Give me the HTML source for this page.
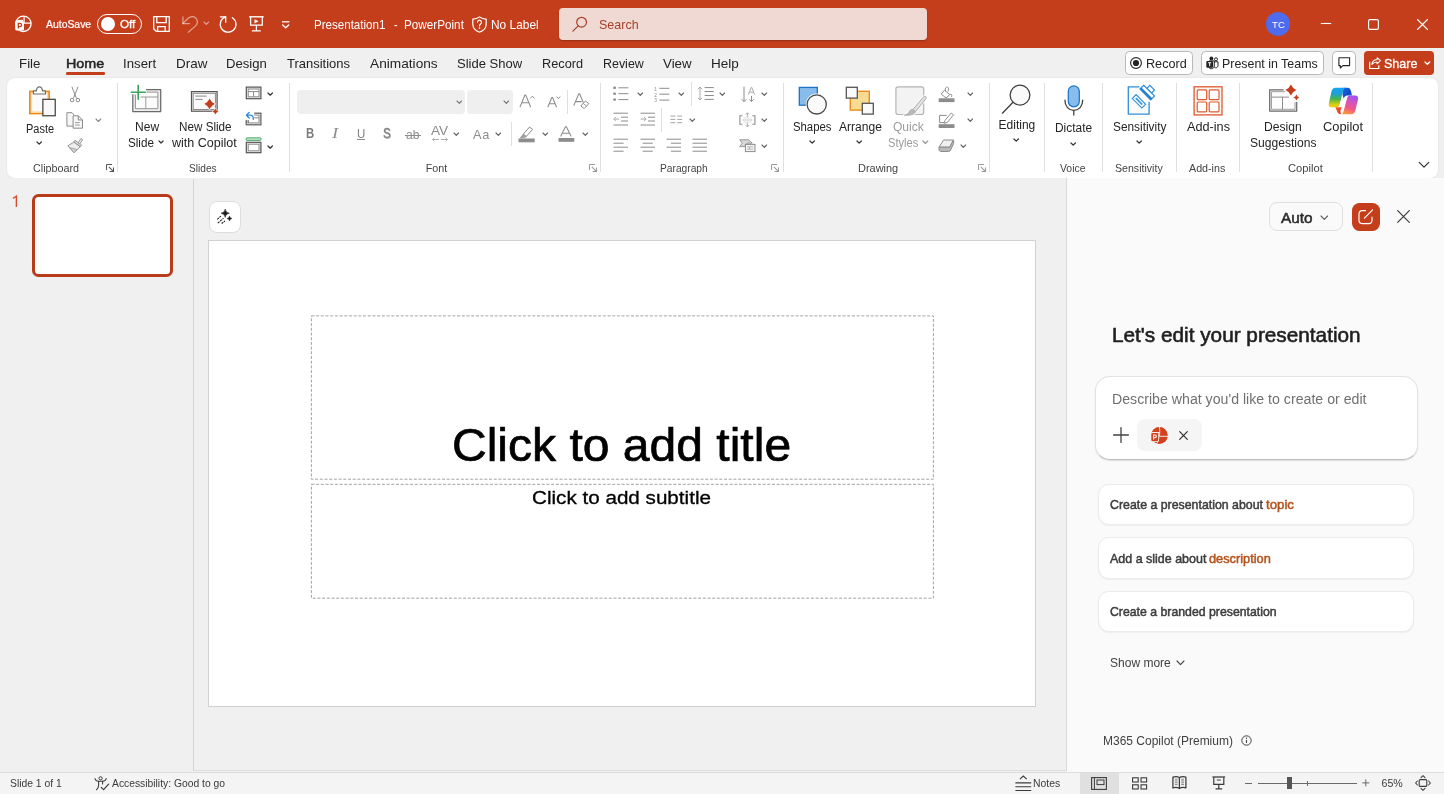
<!DOCTYPE html>
<html lang="en"><head><meta charset="utf-8"><title>Presentation1 - PowerPoint</title>
<style>
*{margin:0;padding:0;box-sizing:border-box}
html,body{width:1444px;height:794px;overflow:hidden;background:#f0f0f0;font-family:"Liberation Sans",sans-serif}
#r{position:relative;width:1444px;height:794px;overflow:hidden;will-change:transform}
.t{position:absolute;white-space:pre;transform-origin:0 0;display:inline-block}
.i{position:absolute;overflow:visible}
.b{position:absolute}
</style></head>
<body><div id="r">
<div class="b" style="left:0.00px;top:0.00px;width:1444.00px;height:48.00px;background:#C43E1C;"></div>
<div class="b" style="left:0.00px;top:48.00px;width:1444.00px;height:130.00px;background:#f0f0f0;"></div>
<div class="b" style="left:7.00px;top:78.00px;width:1431.00px;height:100.00px;background:#fff;border-radius:8px;box-shadow:0 0 2px rgba(0,0,0,.10);"></div>
<svg class="i" style="left:14.00px;top:15.00px;" width="19" height="18" viewBox="0 0 19 18"><circle cx="9.4" cy="8.8" r="7.7" fill="none" stroke="#fff" stroke-width="1.3"/><path d="M10.1 1.2 V8.1 H17" fill="none" stroke="#fff" stroke-width="1.2"/><path d="M3.2 5.4 H9" stroke="#fff" stroke-width="1.1"/><rect x="1.2" y="5.9" width="8.8" height="9.7" rx="1.6" fill="#fff"/><path d="M4.3 13.4 V8.3 H6 A1.6 1.6 0 0 1 6 11.5 H4.3" fill="none" stroke="#C43E1C" stroke-width="1.25"/></svg>
<span class="t" style="transform:scaleX(0.9829);left:46.36px;top:18px;font-size:10.60px;line-height:13px;color:#fff;-webkit-text-stroke:0.2px #fff;">AutoSave</span>
<div class="b" style="left:97.00px;top:14.00px;width:44.50px;height:20.00px;border:1px solid #fff;border-radius:10px;"></div>
<div class="b" style="left:100.70px;top:16.90px;width:14.20px;height:14.20px;background:#fff;border-radius:50%;"></div>
<span class="t" style="transform:scaleX(1.1025);left:119.56px;top:18px;font-size:10.60px;line-height:13px;color:#fff;-webkit-text-stroke:0.3px #fff;">Off</span>
<svg class="i" style="left:153.00px;top:16.00px;" width="17" height="16" viewBox="0 0 17 16"><path d="M0.7 0.7 H16.3 V15.3 H3.2 L0.7 12.8 Z" fill="none" stroke="#fff" stroke-width="1.3" stroke-linejoin="round"/><path d="M3.8 0.7 V6.6 H13.2 V0.7" fill="none" stroke="#fff" stroke-width="1.3"/><path d="M4.6 15.3 V10.6 H12.2 V15.3" fill="none" stroke="#fff" stroke-width="1.3"/></svg>
<svg class="i" style="left:182.00px;top:15.50px;" width="16" height="17" viewBox="0 0 16 17"><path d="M0.9 0.8 V7.5 H7.5" fill="none" stroke="#fff" stroke-width="1.25" stroke-linecap="round" stroke-linejoin="round" opacity=".5"/><path d="M0.9 7.5 L5.6 2.8 C8.4 0 12.4 -0.2 14.4 2.8 C16.2 5.6 15 8.6 13 10.4 L6.3 16.2" fill="none" stroke="#fff" stroke-width="1.25" stroke-linecap="round" opacity=".5"/></svg>
<svg class="i" style="left:202.80px;top:21.40px;" width="6.6" height="4.4" viewBox="0 0 6.6 4.4"><path d="M1 1 L3.3 3.4 L5.6 1" fill="none" stroke="#fff" stroke-width="1.15" stroke-linecap="round" stroke-linejoin="round" opacity="0.5"/></svg>
<svg class="i" style="left:219.00px;top:15.50px;" width="18" height="17" viewBox="0 0 18 17"><path d="M13.4 1.7 A7.9 7.9 0 1 1 6.7 0.8" fill="none" stroke="#fff" stroke-width="1.3" stroke-linecap="round"/><path d="M1.4 0.8 H6.7 V6.2" fill="none" stroke="#fff" stroke-width="1.3" stroke-linecap="round" stroke-linejoin="round"/></svg>
<svg class="i" style="left:248.00px;top:15.50px;" width="17" height="16" viewBox="0 0 17 16"><path d="M1.2 0.8 H15.7" stroke="#fff" stroke-width="1.4" fill="none"/><path d="M2.6 1 V9.1 H14.3 V1" fill="none" stroke="#fff" stroke-width="1.25"/><path d="M8.4 9.1 V14.9 M3.9 14.9 H12.8" stroke="#fff" stroke-width="1.25" fill="none"/><path d="M6.5 3.2 L10.6 5.3 L6.5 7.4 Z" fill="#fff"/></svg>
<svg class="i" style="left:281.00px;top:19.50px;" width="9" height="9" viewBox="0 0 9 9"><path d="M1 1.8 H8.4" stroke="#fff" stroke-width="1.3"/><path d="M1.7 4.9 L4.7 7.7 L7.7 4.9" fill="none" stroke="#fff" stroke-width="1.35" stroke-linecap="round" stroke-linejoin="round"/></svg>
<span class="t" style="transform:scaleX(0.9185);left:314.44px;top:18px;font-size:12.60px;line-height:15px;color:#fff;">Presentation1</span>
<span class="t" style="transform:scaleX(0.8565);left:393.80px;top:18px;font-size:12.60px;line-height:15px;color:#fff;">-</span>
<span class="t" style="transform:scaleX(0.9298);left:404.24px;top:18px;font-size:12.60px;line-height:15px;color:#fff;">PowerPoint</span>
<svg class="i" style="left:472.00px;top:15.50px;" width="15" height="17" viewBox="0 0 15 17"><path d="M7.5 0.9 C9.4 2.4 11.6 3.1 14.2 3.2 V8 C14.2 11.9 11.5 14.8 7.5 16.2 C3.5 14.8 0.8 11.9 0.8 8 V3.2 C3.4 3.1 5.6 2.4 7.5 0.9 Z" fill="none" stroke="#fff" stroke-width="1.2" stroke-linejoin="round"/><path d="M5.5 6.2 A2 2 0 1 1 8.6 7.9 C7.7 8.5 7.5 8.9 7.5 9.9" fill="none" stroke="#fff" stroke-width="1.2" stroke-linecap="round"/><circle cx="7.5" cy="12.1" r=".85" fill="#fff"/></svg>
<span class="t" style="transform:scaleX(0.9477);left:490.84px;top:18px;font-size:12.60px;line-height:15px;color:#fff;">No Label</span>
<div class="b" style="left:559.00px;top:8.00px;width:368.00px;height:31.50px;background:#f0d9d2;border-radius:4px;box-shadow:0 1px 1.5px rgba(0,0,0,.25);"></div>
<svg class="i" style="left:571.50px;top:16.00px;" width="16" height="16" viewBox="0 0 16 16"><circle cx="9.6" cy="6.2" r="4.9" fill="none" stroke="#a4402a" stroke-width="1.2"/><path d="M6.2 9.8 L0.9 15.1" stroke="#a4402a" stroke-width="1.2" stroke-linecap="round"/></svg>
<span class="t" style="transform:scaleX(0.9192);left:599.38px;top:16px;font-size:13.60px;line-height:17px;color:#a4402a;">Search</span>
<div class="b" style="left:1266.00px;top:12.00px;width:24.00px;height:24.00px;background:#4f6bed;border-radius:50%;"></div>
<span class="t" style="transform:scaleX(0.9859);left:1271.81px;top:19px;font-size:9.80px;line-height:12px;color:#fff;">TC</span>
<svg class="i" style="left:1320.00px;top:18.00px;" width="12" height="12" viewBox="0 0 12 12"><path d="M0.8 5.5 H11.2" stroke="#fff" stroke-width="1.1"/></svg>
<svg class="i" style="left:1368.00px;top:18.50px;" width="11" height="11" viewBox="0 0 11 11"><rect x="0.6" y="0.6" width="9.8" height="9.8" rx="1.3" fill="none" stroke="#fff" stroke-width="1.1"/></svg>
<svg class="i" style="left:1416.50px;top:18.50px;" width="11" height="11" viewBox="0 0 11 11"><path d="M0.5 0.5 L10.5 10.5 M10.5 0.5 L0.5 10.5" stroke="#fff" stroke-width="1.1" stroke-linecap="round"/></svg>
<span class="t" style="transform:scaleX(0.9813);left:19.38px;top:55px;font-size:13.60px;line-height:17px;color:#242424;">File</span>
<span class="t" style="transform:scaleX(1.0560);left:65.58px;top:55px;font-size:13.60px;line-height:17px;color:#242424;-webkit-text-stroke:0.5px #242424;">Home</span>
<div class="b" style="left:66.00px;top:72.40px;width:38.50px;height:2.60px;background:#C43E1C;border-radius:1.3px;"></div>
<span class="t" style="transform:scaleX(0.9734);left:123.28px;top:55px;font-size:13.60px;line-height:17px;color:#242424;">Insert</span>
<span class="t" style="transform:scaleX(0.9893);left:176.48px;top:55px;font-size:13.60px;line-height:17px;color:#242424;">Draw</span>
<span class="t" style="transform:scaleX(0.9662);left:226.28px;top:55px;font-size:13.60px;line-height:17px;color:#242424;">Design</span>
<span class="t" style="transform:scaleX(0.9547);left:287.28px;top:55px;font-size:13.60px;line-height:17px;color:#242424;">Transitions</span>
<span class="t" style="transform:scaleX(1.0066);left:369.68px;top:55px;font-size:13.60px;line-height:17px;color:#242424;">Animations</span>
<span class="t" style="transform:scaleX(0.9585);left:457.48px;top:55px;font-size:13.60px;line-height:17px;color:#242424;">Slide Show</span>
<span class="t" style="transform:scaleX(0.9377);left:541.98px;top:55px;font-size:13.60px;line-height:17px;color:#242424;">Record</span>
<span class="t" style="transform:scaleX(0.9152);left:602.98px;top:55px;font-size:13.60px;line-height:17px;color:#242424;">Review</span>
<span class="t" style="transform:scaleX(0.9787);left:663.38px;top:55px;font-size:13.60px;line-height:17px;color:#242424;">View</span>
<span class="t" style="transform:scaleX(0.9938);left:710.98px;top:55px;font-size:13.60px;line-height:17px;color:#242424;">Help</span>
<div class="b" style="left:1125.20px;top:50.60px;width:67.80px;height:24.00px;background:#fff;border:1px solid #b9b9b9;border-radius:4.5px;"></div>
<svg class="i" style="left:1130.00px;top:56.60px;" width="12" height="12" viewBox="0 0 12 12"><circle cx="6" cy="6" r="5.4" fill="none" stroke="#242424" stroke-width="1.1"/><circle cx="6" cy="6" r="3.1" fill="#242424"/></svg>
<span class="t" style="transform:scaleX(0.9285);left:1145.98px;top:55px;font-size:13.60px;line-height:17px;color:#242424;">Record</span>
<div class="b" style="left:1201.00px;top:50.60px;width:123.00px;height:24.00px;background:#fff;border:1px solid #b9b9b9;border-radius:4.5px;"></div>
<svg class="i" style="left:1205.50px;top:56.00px;" width="13" height="13" viewBox="0 0 13 13"><circle cx="5.4" cy="2.4" r="1.9" fill="#242424"/><circle cx="10" cy="3.3" r="1.5" fill="none" stroke="#242424" stroke-width="1"/><path d="M8.3 5.8 H12 V9.6 A2.2 2.2 0 0 1 8.3 11.2" fill="none" stroke="#242424" stroke-width="1"/><path d="M3.2 4.9 H8.3 V10 A3 3 0 0 1 3.4 12.1 Z" fill="none" stroke="#242424" stroke-width="1"/><rect x="0.3" y="4.9" width="6.8" height="6.8" rx="1" fill="#242424"/><path d="M2.2 6.7 H5.2 M3.7 6.7 V10.2" stroke="#fff" stroke-width="1"/></svg>
<span class="t" style="transform:scaleX(0.9133);left:1221.98px;top:55px;font-size:13.60px;line-height:17px;color:#242424;">Present in Teams</span>
<div class="b" style="left:1332.20px;top:50.60px;width:23.50px;height:24.00px;background:#fff;border:1px solid #b9b9b9;border-radius:4.5px;"></div>
<svg class="i" style="left:1338.00px;top:56.50px;" width="13" height="13" viewBox="0 0 13 13"><path d="M0.9 0.8 H11.6 V8.6 H4.9 L2.3 11 V8.6 H0.9 Z" fill="none" stroke="#242424" stroke-width="1.1" stroke-linejoin="round"/></svg>
<div class="b" style="left:1364.20px;top:50.50px;width:70.00px;height:24.40px;background:#C43E1C;border-radius:4px;"></div>
<svg class="i" style="left:1368.50px;top:56.50px;" width="13" height="13" viewBox="0 0 13 13"><path d="M0.7 4.8 V11.5 H9.8 V8.2" fill="none" stroke="#fff" stroke-width="1.2"/><path d="M8.1 0.7 L11.4 3.7 L8.1 6.8 V4.9 C5.6 4.9 4 5.8 2.9 7.4 C3.2 4.6 5.2 2.8 8.1 2.6 Z" fill="none" stroke="#fff" stroke-width="1.05" stroke-linejoin="round"/></svg>
<span class="t" style="transform:scaleX(0.9205);left:1384.38px;top:55px;font-size:13.60px;line-height:17px;color:#fff;-webkit-text-stroke:0.3px #fff;">Share</span>
<svg class="i" style="left:1423.65px;top:60.95px;" width="6.7" height="4.3" viewBox="0 0 6.7 4.3"><path d="M1 1 L3.35 3.3 L5.7 1" fill="none" stroke="#fff" stroke-width="1.3" stroke-linecap="round" stroke-linejoin="round" opacity="1"/></svg>
<svg class="i" style="left:28.00px;top:85.00px;" width="30" height="33" viewBox="0 0 30 33"><rect x="1.9" y="6.5" width="19.2" height="22" fill="#fbfbfb" stroke="#ec8b16" stroke-width="1.8"/><rect x="3.5" y="8" width="16" height="19" fill="none" stroke="#fbdca6" stroke-width="1.3"/><path d="M5.4 9 V5.9 H8.3 C8.6 3.4 9.7 1.9 11.4 1.9 C13.1 1.9 14.2 3.4 14.5 5.9 H17.4 V9 Z" fill="#fff" stroke="#6e6e6e" stroke-width="1.2" stroke-linejoin="round"/><rect x="14.85" y="14.35" width="12.4" height="16.4" fill="#f9f9f9" stroke="#4a4a4a" stroke-width="1.3"/></svg>
<span class="t" style="transform:scaleX(0.9163);left:25.88px;top:122px;font-size:12.00px;line-height:15px;color:#242424;">Paste</span>
<svg class="i" style="left:36.40px;top:141.45px;" width="6.4" height="4.1" viewBox="0 0 6.4 4.1"><path d="M1 1 L3.2 3.1 L5.4 1" fill="none" stroke="#333" stroke-width="1.25" stroke-linecap="round" stroke-linejoin="round" opacity="1"/></svg>
<svg class="i" style="left:68.80px;top:86.00px;" width="12" height="16" viewBox="0 0 12 16"><path d="M2.9 0.8 L7.5 12.4 M9 0.8 L4.4 12.4" stroke="#8c8c8c" stroke-width="1" fill="none"/><circle cx="3" cy="14.1" r="1.75" fill="none" stroke="#8c8c8c" stroke-width="1"/><circle cx="8.9" cy="14.1" r="1.75" fill="none" stroke="#8c8c8c" stroke-width="1"/></svg>
<svg class="i" style="left:66.00px;top:111.50px;" width="18" height="17" viewBox="0 0 18 17"><path d="M7.1 14.1 H0.9 V0.7 H6 L7.5 2.2 V3.8" fill="#f7f7f7" stroke="#8c8c8c" stroke-width="1" stroke-linejoin="miter"/><path d="M7.1 3.8 H12.3 L16.5 8 V16.2 H7.1 Z" fill="#f6f6f6" stroke="#8c8c8c" stroke-width="1" stroke-linejoin="miter"/><path d="M12.3 3.8 V8 H16.5" fill="none" stroke="#8c8c8c" stroke-width="1"/><path d="M9.1 10.6 H13.8 M9.1 13 H13.8" stroke="#8c8c8c" stroke-width=".8"/></svg>
<svg class="i" style="left:94.90px;top:118.05px;" width="6.8" height="4.5" viewBox="0 0 6.8 4.5"><path d="M1 1 L3.4 3.5 L5.8 1" fill="none" stroke="#8c8c8c" stroke-width="1.1" stroke-linecap="round" stroke-linejoin="round" opacity="1"/></svg>
<svg class="i" style="left:66.50px;top:137.80px;" width="18" height="16" viewBox="0 0 18 16"><path d="M6.8 4.2 L0.8 7.8 L7 14.7 L13.3 8.6 Z" fill="#ededed" stroke="#8c8c8c" stroke-width=".9" stroke-linejoin="round"/><path d="M2.6 9.6 L10.2 11.7 L7 14.7 Z" fill="#d3d3d3" stroke="#8c8c8c" stroke-width=".7" stroke-linejoin="round"/><path d="M7.9 2.3 L14.6 6.9 L13.5 8.6 L6.8 4 Z" fill="#e4e4e4" stroke="#8c8c8c" stroke-width=".9" stroke-linejoin="round"/><path d="M13.9 0.6 L15.6 1.7 L12.7 6 L11 4.9 Z" fill="#f2f2f2" stroke="#8c8c8c" stroke-width=".9" stroke-linejoin="round"/></svg>
<span class="t" style="transform:scaleX(0.9950);left:32.85px;top:162px;font-size:10.80px;line-height:13px;color:#444;">Clipboard</span>
<svg class="i" style="left:106.00px;top:164.00px;" width="8" height="8" viewBox="0 0 8 8"><path d="M0.5 6 V0.5 H6" fill="none" stroke="#555" stroke-width="1"/><path d="M2.8 2.8 L7.3 7.3 M7.5 3.6 V7.5 H3.6" fill="none" stroke="#555" stroke-width="1.1"/></svg>
<div class="b" style="left:117.00px;top:83.00px;width:1.00px;height:88.60px;background:#dfdfdf;"></div>
<svg class="i" style="left:130.00px;top:84.00px;" width="32" height="29" viewBox="0 0 32 29"><path d="M2.8 10.2 H16.1 V5.7 H30.7 V27.5 H2.8 Z" fill="#efefef"/><path d="M5.4 10.5 H16.1 V8.1 H27.9 V24.7 H5.4 Z" fill="#fbfbfb"/><path d="M16.1 5.7 H30.7 V27.5 H2.8 V10.2" fill="none" stroke="#6a6a6a" stroke-width="1.25" stroke-linejoin="round"/><path d="M16.6 8.1 H27.9 V24.7 H5.4 V10.5" fill="none" stroke="#929292" stroke-width="1"/><path d="M10.6 13 H27.9 M15.8 13 V24.7" stroke="#9a9a9a" stroke-width="1" fill="none"/><path d="M0.7 8.3 H15.8 M8.2 0.7 V15.7" stroke="#3da35a" stroke-width="1.6" fill="none"/></svg>
<span class="t" style="transform:scaleX(1.0043);left:135.08px;top:120px;font-size:12.00px;line-height:15px;color:#242424;">New</span>
<span class="t" style="transform:scaleX(0.9712);left:128.18px;top:136px;font-size:12.00px;line-height:15px;color:#242424;">Slide</span>
<svg class="i" style="left:157.55px;top:140.40px;" width="6.1" height="4" viewBox="0 0 6.1 4"><path d="M1 1 L3.05 3 L5.1 1" fill="none" stroke="#333" stroke-width="1.2" stroke-linecap="round" stroke-linejoin="round" opacity="1"/></svg>
<svg class="i" style="left:190.00px;top:90.00px;" width="30" height="27" viewBox="0 0 30 27"><rect x="1.5" y="1.6" width="25.6" height="19.6" fill="#f3f3f3" stroke="#555" stroke-width="1.2"/><rect x="3.2" y="3.3" width="22.2" height="16.2" fill="#fafafa" stroke="#8a8a8a" stroke-width="1"/><path d="M5.3 6.1 H16.7 M5.3 9.4 H12.6" stroke="#8a8a8a" stroke-width="1"/><path d="M19.6 7.9 Q21.4 12.1 25.6 13.9 Q21.4 15.7 19.6 19.9 Q17.8 15.7 13.6 13.9 Q17.8 12.1 19.6 7.9 Z" fill="#C43E1C" stroke="#fff" stroke-width=".9"/><path d="M25.4 18 Q26.25 20.65 28.9 21.5 Q26.25 22.35 25.4 25 Q24.55 22.35 21.9 21.5 Q24.55 20.65 25.4 18 Z" fill="#C43E1C" stroke="#fff" stroke-width=".6"/></svg>
<span class="t" style="transform:scaleX(0.9739);left:178.68px;top:120px;font-size:12.00px;line-height:15px;color:#242424;">New Slide</span>
<span class="t" style="transform:scaleX(1.0450);left:172.48px;top:136px;font-size:12.00px;line-height:15px;color:#242424;">with Copilot</span>
<svg class="i" style="left:244.50px;top:86.30px;" width="18" height="14" viewBox="0 0 18 14"><rect x="1.3" y="1.1" width="14.6" height="11.6" fill="#f0f0f0" stroke="#555" stroke-width="1.2"/><rect x="3.2" y="3" width="10.8" height="7.8" fill="#fff" stroke="#8a8a8a" stroke-width="1"/><path d="M3.2 5.6 H14 M8.6 5.6 V10.8" stroke="#8a8a8a" stroke-width="1"/></svg>
<svg class="i" style="left:267.00px;top:92.20px;" width="6.4" height="4.2" viewBox="0 0 6.4 4.2"><path d="M1 1 L3.2 3.2 L5.4 1" fill="none" stroke="#333" stroke-width="1.25" stroke-linecap="round" stroke-linejoin="round" opacity="1"/></svg>
<svg class="i" style="left:244.50px;top:111.40px;" width="18" height="16" viewBox="0 0 18 16"><rect x="1.3" y="2.2" width="14.6" height="11.6" fill="#f0f0f0" stroke="#5a5a5a" stroke-width="1.2"/><rect x="3.2" y="4.1" width="10.8" height="7.8" fill="#fff" stroke="#8a8a8a" stroke-width="1"/><path d="M8 6.8 H14" stroke="#8a8a8a" stroke-width="1"/><rect x="0" y="0" width="9.2" height="9.2" fill="#fff"/><path d="M1.3 9.2 V13.8 M3.2 9.2 V11.9" stroke="#777" stroke-width="1.1"/><path d="M4.2 1.4 L1.4 4.2 L4.2 7 M1.6 4.2 H5.2 C7.4 4.2 8.6 5.8 8.3 8.4" fill="none" stroke="#2b88d8" stroke-width="1.3" stroke-linecap="round" stroke-linejoin="round"/></svg>
<svg class="i" style="left:244.50px;top:137.40px;" width="18" height="17" viewBox="0 0 18 17"><rect x="1.2" y="0.9" width="14.8" height="2.4" rx=".6" fill="#d5eedb" stroke="#3da35a" stroke-width="1"/><rect x="1.3" y="5.3" width="14.6" height="10.4" fill="#f0f0f0" stroke="#555" stroke-width="1.2"/><rect x="3.2" y="7.2" width="10.8" height="6.6" fill="#fff" stroke="#8a8a8a" stroke-width="1"/></svg>
<svg class="i" style="left:267.00px;top:144.50px;" width="6.4" height="4.2" viewBox="0 0 6.4 4.2"><path d="M1 1 L3.2 3.2 L5.4 1" fill="none" stroke="#333" stroke-width="1.25" stroke-linecap="round" stroke-linejoin="round" opacity="1"/></svg>
<span class="t" style="transform:scaleX(0.9377);left:189.15px;top:162px;font-size:10.80px;line-height:13px;color:#444;">Slides</span>
<div class="b" style="left:289.00px;top:83.00px;width:1.00px;height:88.60px;background:#dfdfdf;"></div>
<div class="b" style="left:297.20px;top:90.00px;width:167.70px;height:23.70px;background:#efefef;border-radius:4px;"></div>
<svg class="i" style="left:455.60px;top:100.20px;" width="6.6" height="4.4" viewBox="0 0 6.6 4.4"><path d="M1 1 L3.3 3.4 L5.6 1" fill="none" stroke="#777" stroke-width="1.1" stroke-linecap="round" stroke-linejoin="round" opacity="1"/></svg>
<div class="b" style="left:466.60px;top:90.00px;width:46.10px;height:23.70px;background:#efefef;border-radius:4px;"></div>
<svg class="i" style="left:503.40px;top:100.20px;" width="6.6" height="4.4" viewBox="0 0 6.6 4.4"><path d="M1 1 L3.3 3.4 L5.6 1" fill="none" stroke="#777" stroke-width="1.1" stroke-linecap="round" stroke-linejoin="round" opacity="1"/></svg>
<svg class="i" style="left:519.00px;top:93.50px;" width="17" height="14" viewBox="0 0 17 14"><path d="M0.9 13.2 L5.9 1 H6.7 L11.7 13.2 M2.8 8.8 H9.8" fill="none" stroke="#8c8c8c" stroke-width="1.05"/><path d="M11.4 4.4 L13.4 2.2 L15.4 4.4" fill="none" stroke="#8c8c8c" stroke-width="1"/></svg>
<svg class="i" style="left:547.00px;top:94.50px;" width="15" height="13" viewBox="0 0 15 13"><path d="M0.8 12.2 L4.8 2.6 H5.6 L9.6 12.2 M2.4 8.8 H8" fill="none" stroke="#8c8c8c" stroke-width="1.05"/><path d="M9.6 1.6 L11.4 3.6 L13.2 1.6" fill="none" stroke="#8c8c8c" stroke-width="1"/></svg>
<div class="b" style="left:566.80px;top:90.00px;width:1.00px;height:23.70px;background:#dfdfdf;"></div>
<svg class="i" style="left:572.80px;top:93.40px;" width="17" height="16.5" viewBox="0 0 17 16.5"><path d="M0.8 12.6 L5.8 0.8 H6.6 L10.4 9.8 M2.8 8.6 H8.6" fill="none" stroke="#8c8c8c" stroke-width="1.05"/><path d="M12.4 8 L15.8 10.6 L11.2 15.6 L7.8 13 Z" fill="#fff" stroke="#8c8c8c" stroke-width="1" stroke-linejoin="round"/><path d="M10.2 10.4 L13.6 13" stroke="#8c8c8c" stroke-width=".9"/></svg>
<span class="t" style="transform:scaleX(0.8000);left:305.60px;top:125px;font-size:14.20px;line-height:17px;color:#7c7c7c;font-weight:700;">B</span>
<span class="t" style="transform:scaleX(1.3271);left:332.40px;top:125px;font-size:14.00px;line-height:17px;color:#8c8c8c;font-style:italic;font-family:'Liberation Serif',serif;">I</span>
<span class="t" style="transform:scaleX(0.8445);left:356.80px;top:125px;font-size:13.60px;line-height:17px;color:#808080;">U</span>
<div class="b" style="left:356.60px;top:139.20px;width:8.80px;height:1.00px;background:#8c8c8c;"></div>
<span class="t" style="transform:scaleX(0.7788);left:382.50px;top:124px;font-size:15.00px;line-height:18px;color:#808080;-webkit-text-stroke:0.3px #808080;text-shadow:1.1px 1.1px 0.5px #bcbcbc;">S</span>
<span class="t" style="transform:scaleX(1.0120);left:406.48px;top:128px;font-size:12.00px;line-height:15px;color:#8c8c8c;">ab</span>
<div class="b" style="left:405.30px;top:134.90px;width:16.00px;height:1.00px;background:#8c8c8c;"></div>
<span class="t" style="transform:scaleX(1.0512);left:430.82px;top:123px;font-size:13.00px;line-height:16px;color:#8c8c8c;">AV</span>
<svg class="i" style="left:431.60px;top:136.50px;" width="16" height="5" viewBox="0 0 16 5"><path d="M0.6 2.5 H7 M8.8 2.5 H15.4 M2.4 0.7 L0.6 2.5 L2.4 4.3 M13.6 0.7 L15.4 2.5 L13.6 4.3" fill="none" stroke="#a6a6a6" stroke-width=".9"/></svg>
<svg class="i" style="left:452.80px;top:132.00px;" width="6.6" height="4.4" viewBox="0 0 6.6 4.4"><path d="M1 1 L3.3 3.4 L5.6 1" fill="none" stroke="#646464" stroke-width="1.15" stroke-linecap="round" stroke-linejoin="round" opacity="1"/></svg>
<span class="t" style="transform:scaleX(0.9376);left:473.18px;top:126px;font-size:13.60px;line-height:17px;color:#8c8c8c;letter-spacing:.8px;">Aa</span>
<svg class="i" style="left:494.90px;top:132.00px;" width="6.6" height="4.4" viewBox="0 0 6.6 4.4"><path d="M1 1 L3.3 3.4 L5.6 1" fill="none" stroke="#646464" stroke-width="1.15" stroke-linecap="round" stroke-linejoin="round" opacity="1"/></svg>
<div class="b" style="left:511.40px;top:122.40px;width:1.00px;height:23.30px;background:#dfdfdf;"></div>
<svg class="i" style="left:517.50px;top:125.50px;" width="18" height="17" viewBox="0 0 18 17"><path d="M11.6 1 L14.6 3.4 L8.4 10.4 L5.2 8.2 Z" fill="#fff" stroke="#8c8c8c" stroke-width="1" stroke-linejoin="round"/><path d="M5.2 8.4 L8.2 10.6 L6.6 11.6 L2.4 11.8 Z" fill="#a6a6a6" stroke="#8c8c8c" stroke-width=".8" stroke-linejoin="round"/><rect x="0.5" y="12.5" width="16.2" height="3.8" fill="#8c8c8c"/></svg>
<svg class="i" style="left:541.50px;top:132.00px;" width="6.6" height="4.4" viewBox="0 0 6.6 4.4"><path d="M1 1 L3.3 3.4 L5.6 1" fill="none" stroke="#646464" stroke-width="1.15" stroke-linecap="round" stroke-linejoin="round" opacity="1"/></svg>
<svg class="i" style="left:558.40px;top:126.00px;" width="17" height="17" viewBox="0 0 17 17"><path d="M2.6 10.6 L7.4 0.8 H8.4 L13.2 10.6 M4.4 7.2 H11.4" fill="none" stroke="#8c8c8c" stroke-width="1.05"/><rect x="0.5" y="12" width="15.8" height="3.8" fill="#8c8c8c"/></svg>
<svg class="i" style="left:582.10px;top:132.00px;" width="6.6" height="4.4" viewBox="0 0 6.6 4.4"><path d="M1 1 L3.3 3.4 L5.6 1" fill="none" stroke="#646464" stroke-width="1.15" stroke-linecap="round" stroke-linejoin="round" opacity="1"/></svg>
<span class="t" style="left:425.65px;top:162px;font-size:10.80px;line-height:13px;color:#444;">Font</span>
<svg class="i" style="left:589.40px;top:164.00px;" width="8" height="8" viewBox="0 0 8 8"><path d="M0.5 6 V0.5 H6" fill="none" stroke="#9a9a9a" stroke-width="1"/><path d="M2.8 2.8 L7.3 7.3 M7.5 3.6 V7.5 H3.6" fill="none" stroke="#9a9a9a" stroke-width="1.1"/></svg>
<div class="b" style="left:600.00px;top:83.00px;width:1.00px;height:88.60px;background:#dfdfdf;"></div>
<svg class="i" style="left:613.00px;top:86.00px;" width="16" height="15" viewBox="0 0 16 15"><rect x="0.3" y="0.7" width="2.6" height="2.2" fill="#8c8c8c"/><rect x="0.3" y="6.6" width="2.6" height="2.2" fill="#8c8c8c"/><rect x="0.3" y="12.5" width="2.6" height="2.2" fill="#8c8c8c"/><path d="M5.4 1.8 H15.4" stroke="#8c8c8c" stroke-width="1"/><path d="M5.4 7.7 H15.4" stroke="#8c8c8c" stroke-width="1"/><path d="M5.4 13.6 H15.4" stroke="#8c8c8c" stroke-width="1"/></svg>
<svg class="i" style="left:636.70px;top:92.30px;" width="6.6" height="4.4" viewBox="0 0 6.6 4.4"><path d="M1 1 L3.3 3.4 L5.6 1" fill="none" stroke="#646464" stroke-width="1.15" stroke-linecap="round" stroke-linejoin="round" opacity="1"/></svg>
<svg class="i" style="left:653.60px;top:85.50px;" width="16" height="16" viewBox="0 0 16 16"><text x="0.3" y="4.6" font-size="4.8" fill="#8c8c8c" font-family="Liberation Sans">1</text><text x="0.3" y="10.5" font-size="4.8" fill="#8c8c8c" font-family="Liberation Sans">2</text><text x="0.3" y="16.2" font-size="4.8" fill="#8c8c8c" font-family="Liberation Sans">3</text><path d="M5.4 2.3 H15.4" stroke="#8c8c8c" stroke-width="1"/><path d="M5.4 8.2 H15.4" stroke="#8c8c8c" stroke-width="1"/><path d="M5.4 14.1 H15.4" stroke="#8c8c8c" stroke-width="1"/></svg>
<svg class="i" style="left:677.50px;top:92.30px;" width="6.6" height="4.4" viewBox="0 0 6.6 4.4"><path d="M1 1 L3.3 3.4 L5.6 1" fill="none" stroke="#646464" stroke-width="1.15" stroke-linecap="round" stroke-linejoin="round" opacity="1"/></svg>
<div class="b" style="left:690.80px;top:82.20px;width:1.00px;height:23.60px;background:#dfdfdf;"></div>
<svg class="i" style="left:696.60px;top:86.00px;" width="17.5" height="15" viewBox="0 0 17.5 15"><path d="M3 1 V14 M0.8 3.2 L3 1 L5.2 3.2 M0.8 11.8 L3 14 L5.2 11.8" fill="none" stroke="#a6a6a6" stroke-width=".95"/><path d="M7.6 1.6 H16.8" stroke="#8c8c8c" stroke-width="1"/><path d="M7.6 5.5 H16.8" stroke="#8c8c8c" stroke-width="1"/><path d="M7.6 9.5 H16.8" stroke="#8c8c8c" stroke-width="1"/><path d="M7.6 13.4 H16.8" stroke="#8c8c8c" stroke-width="1"/></svg>
<svg class="i" style="left:718.80px;top:92.30px;" width="6.6" height="4.4" viewBox="0 0 6.6 4.4"><path d="M1 1 L3.3 3.4 L5.6 1" fill="none" stroke="#646464" stroke-width="1.15" stroke-linecap="round" stroke-linejoin="round" opacity="1"/></svg>
<svg class="i" style="left:740.60px;top:85.50px;" width="15" height="17.5" viewBox="0 0 15 17.5"><path d="M3 0.6 V15.6 M0.7 13.2 L3 15.6 L5.3 13.2" fill="none" stroke="#8c8c8c" stroke-width="1"/><path d="M7.4 8.6 L10.2 1.4 H10.8 L13.6 8.6 M8.4 6.2 H12.6" fill="none" stroke="#a6a6a6" stroke-width=".95"/><path d="M10.5 10 V15.6 M8.3 13.4 L10.5 15.6 L12.7 13.4" fill="none" stroke="#8c8c8c" stroke-width="1"/></svg>
<svg class="i" style="left:760.90px;top:92.30px;" width="6.6" height="4.4" viewBox="0 0 6.6 4.4"><path d="M1 1 L3.3 3.4 L5.6 1" fill="none" stroke="#646464" stroke-width="1.15" stroke-linecap="round" stroke-linejoin="round" opacity="1"/></svg>
<svg class="i" style="left:613.40px;top:112.40px;" width="16" height="14" viewBox="0 0 16 14"><path d="M0.5 1.2 H15" stroke="#8c8c8c" stroke-width="1"/><path d="M0.5 13 H15" stroke="#8c8c8c" stroke-width="1"/><path d="M8 5.2 H15" stroke="#8c8c8c" stroke-width="1"/><path d="M8 9 H15" stroke="#8c8c8c" stroke-width="1"/><path d="M0.8 7.1 H6.2 M2.8 5 L0.8 7.1 L2.8 9.2" fill="none" stroke="#a6a6a6" stroke-width=".95"/></svg>
<svg class="i" style="left:639.70px;top:112.40px;" width="16" height="14" viewBox="0 0 16 14"><path d="M0.5 1.2 H15" stroke="#8c8c8c" stroke-width="1"/><path d="M0.5 13 H15" stroke="#8c8c8c" stroke-width="1"/><path d="M8 5.2 H15" stroke="#8c8c8c" stroke-width="1"/><path d="M8 9 H15" stroke="#8c8c8c" stroke-width="1"/><path d="M0.6 7.1 H6 M4 5 L6 7.1 L4 9.2" fill="none" stroke="#a6a6a6" stroke-width=".95"/></svg>
<div class="b" style="left:661.40px;top:108.10px;width:1.00px;height:23.60px;background:#dfdfdf;"></div>
<svg class="i" style="left:669.60px;top:115.40px;" width="13" height="9" viewBox="0 0 13 9"><path d="M0.4 1.1 H5.4" stroke="#a6a6a6" stroke-width="1"/><path d="M0.4 4.4 H5.4" stroke="#a6a6a6" stroke-width="1"/><path d="M0.4 7.7 H5.4" stroke="#a6a6a6" stroke-width="1"/><path d="M7.2 1.1 H12.2" stroke="#a6a6a6" stroke-width="1"/><path d="M7.2 4.4 H12.2" stroke="#a6a6a6" stroke-width="1"/><path d="M7.2 7.7 H12.2" stroke="#a6a6a6" stroke-width="1"/></svg>
<svg class="i" style="left:689.40px;top:118.10px;" width="6.6" height="4.4" viewBox="0 0 6.6 4.4"><path d="M1 1 L3.3 3.4 L5.6 1" fill="none" stroke="#646464" stroke-width="1.15" stroke-linecap="round" stroke-linejoin="round" opacity="1"/></svg>
<svg class="i" style="left:738.80px;top:111.80px;" width="17" height="15.5" viewBox="0 0 17 15.5"><path d="M3.4 3.8 H0.9 V12.2 H3.4 M13.4 3.8 H15.9 V12.2 H13.4" fill="none" stroke="#8c8c8c" stroke-width="1.1"/><path d="M3.6 8 H13.2" stroke="#a6a6a6" stroke-width=".9"/><path d="M8.4 0.8 V6 M6.6 2.6 L8.4 0.8 L10.2 2.6 M8.4 10 V14.8 M6.6 13 L8.4 14.8 L10.2 13" fill="none" stroke="#a6a6a6" stroke-width=".9"/><rect x="4.4" y="4.6" width="8" height="6.8" fill="#e9e9e9" opacity=".7"/></svg>
<svg class="i" style="left:760.90px;top:118.10px;" width="6.6" height="4.4" viewBox="0 0 6.6 4.4"><path d="M1 1 L3.3 3.4 L5.6 1" fill="none" stroke="#646464" stroke-width="1.15" stroke-linecap="round" stroke-linejoin="round" opacity="1"/></svg>
<svg class="i" style="left:613.40px;top:138.40px;" width="16" height="14.5" viewBox="0 0 16 14.5"><path d="M0.5 1.2 H15" stroke="#8c8c8c" stroke-width="1"/><path d="M0.5 5.2 H10.6" stroke="#8c8c8c" stroke-width="1"/><path d="M0.5 9.2 H15" stroke="#8c8c8c" stroke-width="1"/><path d="M0.5 13.2 H10.6" stroke="#8c8c8c" stroke-width="1"/></svg>
<svg class="i" style="left:639.70px;top:138.40px;" width="16" height="14.5" viewBox="0 0 16 14.5"><path d="M0.5 1.2 H15" stroke="#8c8c8c" stroke-width="1"/><path d="M2.7 5.2 H12.8" stroke="#8c8c8c" stroke-width="1"/><path d="M0.5 9.2 H15" stroke="#8c8c8c" stroke-width="1"/><path d="M2.7 13.2 H12.8" stroke="#8c8c8c" stroke-width="1"/></svg>
<svg class="i" style="left:665.70px;top:138.40px;" width="16" height="14.5" viewBox="0 0 16 14.5"><path d="M0.5 1.2 H15" stroke="#8c8c8c" stroke-width="1"/><path d="M4.9 5.2 H15" stroke="#8c8c8c" stroke-width="1"/><path d="M0.5 9.2 H15" stroke="#8c8c8c" stroke-width="1"/><path d="M4.9 13.2 H15" stroke="#8c8c8c" stroke-width="1"/></svg>
<svg class="i" style="left:691.60px;top:138.40px;" width="16" height="14.5" viewBox="0 0 16 14.5"><path d="M0.5 1.2 H15" stroke="#8c8c8c" stroke-width="1"/><path d="M0.5 5.2 H15" stroke="#8c8c8c" stroke-width="1"/><path d="M0.5 9.2 H15" stroke="#8c8c8c" stroke-width="1"/><path d="M0.5 13.2 H15" stroke="#8c8c8c" stroke-width="1"/></svg>
<svg class="i" style="left:739.20px;top:139.40px;" width="17" height="13.5" viewBox="0 0 17 13.5"><path d="M0.8 0.8 H9.6 L13.2 4.2 H8 L6.2 7.6 H0.8 L3.2 4.2 Z" fill="#d9d9d9" stroke="#8c8c8c" stroke-width=".9" stroke-linejoin="round"/><rect x="6.4" y="5.4" width="9.6" height="7.2" fill="#f6f6f6" stroke="#8c8c8c" stroke-width="1"/><path d="M8 7.8 H14.4 M8 10.2 H14.4 M10.4 7.8 V10.2" stroke="#a6a6a6" stroke-width=".8"/></svg>
<svg class="i" style="left:760.90px;top:144.20px;" width="6.6" height="4.4" viewBox="0 0 6.6 4.4"><path d="M1 1 L3.3 3.4 L5.6 1" fill="none" stroke="#646464" stroke-width="1.15" stroke-linecap="round" stroke-linejoin="round" opacity="1"/></svg>
<span class="t" style="transform:scaleX(0.9458);left:659.95px;top:162px;font-size:10.80px;line-height:13px;color:#444;">Paragraph</span>
<svg class="i" style="left:771.10px;top:164.00px;" width="8" height="8" viewBox="0 0 8 8"><path d="M0.5 6 V0.5 H6" fill="none" stroke="#9a9a9a" stroke-width="1"/><path d="M2.8 2.8 L7.3 7.3 M7.5 3.6 V7.5 H3.6" fill="none" stroke="#9a9a9a" stroke-width="1.1"/></svg>
<div class="b" style="left:783.00px;top:83.00px;width:1.00px;height:88.60px;background:#dfdfdf;"></div>
<svg class="i" style="left:798.00px;top:86.00px;" width="30" height="30" viewBox="0 0 30 30"><rect x="1.3" y="1.4" width="18" height="17.8" fill="#86bdec" stroke="#1f74c7" stroke-width="1.3"/><circle cx="18.7" cy="18.4" r="10.9" fill="#fff"/><circle cx="18.7" cy="18.4" r="9.6" fill="#fbfbfb" stroke="#4a4a4a" stroke-width="1.3"/></svg>
<span class="t" style="transform:scaleX(0.9439);left:793.48px;top:120px;font-size:12.00px;line-height:15px;color:#242424;">Shapes</span>
<svg class="i" style="left:809.00px;top:140.25px;" width="6.4" height="4.1" viewBox="0 0 6.4 4.1"><path d="M1 1 L3.2 3.1 L5.4 1" fill="none" stroke="#333" stroke-width="1.25" stroke-linecap="round" stroke-linejoin="round" opacity="1"/></svg>
<svg class="i" style="left:844.80px;top:86.00px;" width="30" height="30" viewBox="0 0 30 30"><rect x="5.3" y="5.3" width="19" height="18.8" fill="#f8db93" stroke="#ea8c1e" stroke-width="1.4"/><rect x="1.3" y="1.3" width="11" height="10.8" fill="#fafafa" stroke="#555" stroke-width="1.3"/><rect x="17.3" y="17.3" width="11" height="10.8" fill="#fafafa" stroke="#555" stroke-width="1.3"/></svg>
<span class="t" style="transform:scaleX(1.0051);left:838.88px;top:120px;font-size:12.00px;line-height:15px;color:#242424;">Arrange</span>
<svg class="i" style="left:856.40px;top:140.25px;" width="6.4" height="4.1" viewBox="0 0 6.4 4.1"><path d="M1 1 L3.2 3.1 L5.4 1" fill="none" stroke="#333" stroke-width="1.25" stroke-linecap="round" stroke-linejoin="round" opacity="1"/></svg>
<svg class="i" style="left:894.50px;top:86.00px;" width="36" height="31" viewBox="0 0 36 31"><rect x="0.9" y="0.9" width="27.8" height="27.6" rx="2.2" fill="#f3f3f3" stroke="#b4b4b4" stroke-width="1.2"/><path d="M30.3 10.4 C31.2 10.8 31.6 11.6 31 12.6 L20.3 25.8 L17.7 23.8 L28.6 10.8 C29.2 10.2 29.8 10.2 30.3 10.4 Z" fill="#e4e4e4" stroke="#fff" stroke-width="2.6" stroke-linejoin="round"/><path d="M17.6 23.4 L20.4 25.8 C19.6 28.2 16 29.6 9.3 29.2 C12.6 28.2 13.6 27 14.2 25.6 C15 24 16.2 23.2 17.6 23.4 Z" fill="#b9b9b9" stroke="#fff" stroke-width="2.4" stroke-linejoin="round"/><path d="M30.3 10.4 C31.2 10.8 31.6 11.6 31 12.6 L20.3 25.8 L17.7 23.8 L28.6 10.8 C29.2 10.2 29.8 10.2 30.3 10.4 Z" fill="#e4e4e4" stroke="#a6a6a6" stroke-width="1" stroke-linejoin="round"/><path d="M17.6 23.4 L20.4 25.8 C19.6 28.2 16 29.6 9.3 29.2 C12.6 28.2 13.6 27 14.2 25.6 C15 24 16.2 23.2 17.6 23.4 Z" fill="#b9b9b9" stroke="#a6a6a6" stroke-width=".8" stroke-linejoin="round"/></svg>
<span class="t" style="transform:scaleX(1.0043);left:893.48px;top:120px;font-size:12.00px;line-height:15px;color:#9b9b9b;">Quick</span>
<span class="t" style="transform:scaleX(0.9276);left:888.38px;top:136px;font-size:12.00px;line-height:15px;color:#9b9b9b;">Styles</span>
<svg class="i" style="left:922.10px;top:140.05px;" width="6.8" height="4.5" viewBox="0 0 6.8 4.5"><path d="M1 1 L3.4 3.5 L5.8 1" fill="none" stroke="#9b9b9b" stroke-width="1.2" stroke-linecap="round" stroke-linejoin="round" opacity="1"/></svg>
<svg class="i" style="left:938.30px;top:85.60px;" width="18" height="16.5" viewBox="0 0 18 16.5"><path d="M6.4 4.2 L11.8 8.6 L8 12 L3.2 8 Z" fill="#fff" stroke="#8c8c8c" stroke-width="1" stroke-linejoin="round"/><path d="M7.6 5 C6.6 2.4 8 0.6 9.6 1.2 C10.8 1.8 10.6 3.6 10 5.6" fill="none" stroke="#8c8c8c" stroke-width=".95"/><path d="M11.8 8.6 C13.6 7.6 14.2 9.2 13.6 11" fill="none" stroke="#8c8c8c" stroke-width=".95"/><rect x="0.7" y="12.3" width="15.8" height="3.8" fill="#8c8c8c"/></svg>
<svg class="i" style="left:966.80px;top:92.10px;" width="6.6" height="4.4" viewBox="0 0 6.6 4.4"><path d="M1 1 L3.3 3.4 L5.6 1" fill="none" stroke="#646464" stroke-width="1.15" stroke-linecap="round" stroke-linejoin="round" opacity="1"/></svg>
<svg class="i" style="left:938.30px;top:111.80px;" width="18" height="16.5" viewBox="0 0 18 16.5"><path d="M8.6 3.4 H1.6 V10.6 H9" fill="none" stroke="#8c8c8c" stroke-width="1"/><path d="M13.2 1 L15.6 2.8 L9.4 10.4 L6 11.2 L7 8.4 Z" fill="#fff" stroke="#8c8c8c" stroke-width=".95" stroke-linejoin="round"/><rect x="0.7" y="12.2" width="15.8" height="3.8" fill="#8c8c8c"/></svg>
<svg class="i" style="left:966.80px;top:118.10px;" width="6.6" height="4.4" viewBox="0 0 6.6 4.4"><path d="M1 1 L3.3 3.4 L5.6 1" fill="none" stroke="#646464" stroke-width="1.15" stroke-linecap="round" stroke-linejoin="round" opacity="1"/></svg>
<svg class="i" style="left:938.30px;top:139.00px;" width="18" height="13.5" viewBox="0 0 18 13.5"><path d="M5.6 1 H15.6 L11.6 8.2 H1 Z" fill="#f0f0f0" stroke="#8c8c8c" stroke-width="1" stroke-linejoin="round"/><path d="M1 8.2 V10.8 C1.2 11.8 1.8 12.4 3 12.5 H10.6 C11.6 12.4 12 12 12.6 11 L15.6 4.6 V1 L11.6 8.2 Z" fill="#b9b9b9" stroke="#8c8c8c" stroke-width="1" stroke-linejoin="round"/></svg>
<svg class="i" style="left:960.40px;top:144.10px;" width="6.6" height="4.4" viewBox="0 0 6.6 4.4"><path d="M1 1 L3.3 3.4 L5.6 1" fill="none" stroke="#646464" stroke-width="1.15" stroke-linecap="round" stroke-linejoin="round" opacity="1"/></svg>
<span class="t" style="transform:scaleX(1.0146);left:857.75px;top:162px;font-size:10.80px;line-height:13px;color:#444;">Drawing</span>
<svg class="i" style="left:977.90px;top:164.00px;" width="8" height="8" viewBox="0 0 8 8"><path d="M0.5 6 V0.5 H6" fill="none" stroke="#9a9a9a" stroke-width="1"/><path d="M2.8 2.8 L7.3 7.3 M7.5 3.6 V7.5 H3.6" fill="none" stroke="#9a9a9a" stroke-width="1.1"/></svg>
<div class="b" style="left:989.00px;top:83.00px;width:1.00px;height:88.60px;background:#dfdfdf;"></div>
<svg class="i" style="left:1001.00px;top:84.00px;" width="31" height="31" viewBox="0 0 31 31"><circle cx="19" cy="11.1" r="9.9" fill="#fafafa" stroke="#3b3b3b" stroke-width="1.25"/><path d="M12 18.2 L1.4 29.2" stroke="#3b3b3b" stroke-width="1.25" stroke-linecap="round"/></svg>
<span class="t" style="left:998.58px;top:118px;font-size:12.00px;line-height:15px;color:#242424;">Editing</span>
<svg class="i" style="left:1013.10px;top:138.45px;" width="6.4" height="4.1" viewBox="0 0 6.4 4.1"><path d="M1 1 L3.2 3.1 L5.4 1" fill="none" stroke="#333" stroke-width="1.25" stroke-linecap="round" stroke-linejoin="round" opacity="1"/></svg>
<div class="b" style="left:1044.00px;top:83.00px;width:1.00px;height:88.60px;background:#dfdfdf;"></div>
<svg class="i" style="left:1062.50px;top:85.00px;" width="22" height="31.5" viewBox="0 0 22 31.5"><rect x="5.3" y="0.8" width="11" height="21" rx="5.5" fill="#86bdec" stroke="#1f74c7" stroke-width="1.25"/><path d="M1.9 15 C1.9 21.4 5.8 25.3 10.8 25.3 C15.8 25.3 19.7 21.4 19.7 15" fill="none" stroke="#3b3b3b" stroke-width="1.25" stroke-linecap="round"/><path d="M10.8 25.4 V30.6" stroke="#3b3b3b" stroke-width="1.25"/></svg>
<span class="t" style="transform:scaleX(0.9936);left:1055.18px;top:121px;font-size:12.00px;line-height:15px;color:#242424;">Dictate</span>
<svg class="i" style="left:1069.70px;top:141.65px;" width="6.4" height="4.1" viewBox="0 0 6.4 4.1"><path d="M1 1 L3.2 3.1 L5.4 1" fill="none" stroke="#333" stroke-width="1.25" stroke-linecap="round" stroke-linejoin="round" opacity="1"/></svg>
<span class="t" style="transform:scaleX(0.9647);left:1060.45px;top:162px;font-size:10.80px;line-height:13px;color:#444;">Voice</span>
<div class="b" style="left:1102.00px;top:83.00px;width:1.00px;height:88.60px;background:#dfdfdf;"></div>
<svg class="i" style="left:1127.00px;top:84.00px;" width="31" height="32" viewBox="0 0 31 32"><rect x="1.3" y="2.8" width="20.8" height="27.4" fill="#fafafa"/><rect x="12.4" y="0" width="12" height="17.7" fill="#fff"/><path d="M12.4 2.8 H1.3 V30.2 H22.1 V17.7" fill="none" stroke="#2f8fdc" stroke-width="1.3"/><g transform="translate(5.3 14.4) rotate(45)"><rect x="0" y="-5.3" width="13.5" height="5.3" fill="#fff" stroke="#2f8fdc" stroke-width="1.1"/><rect x="2.5" y="-3.3" width="8.6" height="1.3" fill="#2f8fdc" stroke="#2f8fdc" stroke-width=".5"/></g><g transform="translate(12.9 5.1) rotate(45)"><rect x="4.4" y="-9.6" width="6.6" height="4.2" fill="#fff" stroke="#2f8fdc" stroke-width="1.2"/><rect x="0" y="-5.4" width="15.3" height="5.4" fill="#fff" stroke="#2f8fdc" stroke-width="1.2"/><rect x="0" y="-2.2" width="15.3" height="2.2" fill="#1f7fd0"/></g></svg>
<span class="t" style="transform:scaleX(0.9887);left:1112.98px;top:120px;font-size:12.00px;line-height:15px;color:#242424;">Sensitivity</span>
<svg class="i" style="left:1135.50px;top:140.25px;" width="6.4" height="4.1" viewBox="0 0 6.4 4.1"><path d="M1 1 L3.2 3.1 L5.4 1" fill="none" stroke="#333" stroke-width="1.25" stroke-linecap="round" stroke-linejoin="round" opacity="1"/></svg>
<span class="t" style="transform:scaleX(0.9810);left:1114.95px;top:162px;font-size:10.80px;line-height:13px;color:#444;">Sensitivity</span>
<div class="b" style="left:1176.00px;top:83.00px;width:1.00px;height:88.60px;background:#dfdfdf;"></div>
<svg class="i" style="left:1193.00px;top:85.80px;" width="30" height="30" viewBox="0 0 30 30"><rect x="1.1" y="0.8" width="27.9" height="28.1" fill="#fffaf7" stroke="#de5a2e" stroke-width="1.3"/><rect x="4.2" y="3.8" width="9.5" height="9.8" rx="1.1" fill="#fff" stroke="#de5a2e" stroke-width="1.2"/><rect x="16.2" y="3.8" width="9.8" height="9.8" rx="1.1" fill="#fff" stroke="#de5a2e" stroke-width="1.2"/><rect x="4.2" y="16" width="9.5" height="9.9" rx="1.1" fill="#fff" stroke="#de5a2e" stroke-width="1.2"/><rect x="16.2" y="16" width="9.8" height="9.9" rx="1.1" fill="#fff" stroke="#de5a2e" stroke-width="1.2"/></svg>
<span class="t" style="transform:scaleX(1.0573);left:1186.78px;top:120px;font-size:12.00px;line-height:15px;color:#242424;">Add-ins</span>
<span class="t" style="transform:scaleX(0.9912);left:1189.25px;top:162px;font-size:10.80px;line-height:13px;color:#444;">Add-ins</span>
<div class="b" style="left:1239.00px;top:83.00px;width:1.00px;height:88.60px;background:#dfdfdf;"></div>
<svg class="i" style="left:1268.00px;top:83.00px;" width="34" height="30" viewBox="0 0 34 30"><rect x="1.7" y="6.9" width="27" height="21.1" fill="#f4f4f4"/><rect x="3.5" y="8.7" width="23.5" height="17.6" fill="#fcfcfc"/><rect x="16.2" y="0" width="17.8" height="19.1" fill="#fff"/><path d="M15.6 6.9 H1.7 V28 H28.7 V19.1" fill="none" stroke="#6a6a6a" stroke-width="1.25" stroke-linejoin="round"/><path d="M17.4 8.7 H3.5 V26.3 H27 V19.1" fill="none" stroke="#a0a0a0" stroke-width="1"/><path d="M3.5 14.1 H20.9 M14.5 14.1 V26.3" stroke="#8c8c8c" stroke-width="1" fill="none"/><path d="M22.9 1.6 Q24.5 5.5 28.4 7.1 Q24.5 8.7 22.9 12.6 Q21.3 8.7 17.4 7.1 Q21.3 5.5 22.9 1.6 Z" fill="#C43E1C" /><path d="M28.4 11.4 Q29.1 13.8 31.5 14.5 Q29.1 15.2 28.4 17.6 Q27.7 15.2 25.3 14.5 Q27.7 13.8 28.4 11.4 Z" fill="#C43E1C" /></svg>
<span class="t" style="transform:scaleX(1.0097);left:1264.18px;top:120px;font-size:12.00px;line-height:15px;color:#242424;">Design</span>
<span class="t" style="transform:scaleX(1.0056);left:1249.88px;top:136px;font-size:12.00px;line-height:15px;color:#242424;">Suggestions</span>
<svg class="i" style="left:1327.50px;top:86.50px;" width="31" height="28" viewBox="0 0 31 28"><defs><linearGradient id="cpA" x1="0" y1="0" x2="1" y2="1"><stop offset="0" stop-color="#1a6fe0"/><stop offset=".6" stop-color="#1247c8"/><stop offset="1" stop-color="#2f6ee8"/></linearGradient><linearGradient id="cpB" x1="0" y1="0" x2="0" y2="1"><stop offset="0" stop-color="#16a2f5"/><stop offset=".3" stop-color="#1e9fd8"/><stop offset=".58" stop-color="#45b649"/><stop offset=".85" stop-color="#d6cf12"/><stop offset="1" stop-color="#f5c800"/></linearGradient><linearGradient id="cpC" x1="0.6" y1="0" x2="0.3" y2="1"><stop offset="0" stop-color="#a64ff2"/><stop offset=".35" stop-color="#d655b8"/><stop offset=".65" stop-color="#f0568a"/><stop offset="1" stop-color="#ff9b3a"/></linearGradient><linearGradient id="cpD" x1="0" y1="0" x2="1" y2="1"><stop offset="0" stop-color="#f0602c"/><stop offset="1" stop-color="#d93a2a"/></linearGradient></defs><path d="M15.4 0.7 H19.6 C21.4 0.7 22.2 1.6 22.7 3.2 L24.1 8.6 H19.2 C17.4 8.8 16.4 9.8 15.6 11.6 L14.4 7 Z" fill="url(#cpA)"/><path d="M7.4 0.7 H17.2 C16 1.6 15.4 3 14.9 4.8 L11.6 17.6 C11 19.4 10.2 20.2 8.6 20.2 H3.6 C1.4 20.2 0.3 18.6 0.8 16.4 L3.6 4 C4.1 2 5.4 0.7 7.4 0.7 Z" fill="url(#cpB)"/><path d="M7.3 20.2 H13.6 L12.4 24 L12.9 27.3 C11 27.3 9.8 26.4 9.3 24.8 Z" fill="url(#cpD)"/><path d="M23.4 27.3 H13.6 C14.8 26.4 15.4 25 15.9 23.2 L19.2 10.8 C19.8 9.2 20.6 8.6 22.2 8.6 H27.2 C29.4 8.6 30.5 10.2 30 12.4 L27.2 24 C26.7 26 25.4 27.3 23.4 27.3 Z" fill="url(#cpC)"/></svg>
<span class="t" style="transform:scaleX(1.0712);left:1322.58px;top:120px;font-size:12.00px;line-height:15px;color:#242424;">Copilot</span>
<span class="t" style="transform:scaleX(1.0351);left:1287.95px;top:162px;font-size:10.80px;line-height:13px;color:#444;">Copilot</span>
<div class="b" style="left:1372.00px;top:83.00px;width:1.00px;height:88.60px;background:#dfdfdf;"></div>
<svg class="i" style="left:1417.60px;top:160.80px;" width="12" height="8" viewBox="0 0 12 8"><path d="M1.2 1.4 L6 6.2 L10.8 1.4" fill="none" stroke="#333" stroke-width="1.2" stroke-linecap="round" stroke-linejoin="round"/></svg>
<div class="b" style="left:0.00px;top:178.00px;width:1067.00px;height:593.00px;background:#f0f0f0;"></div>
<div class="b" style="left:193.00px;top:179.00px;width:1.00px;height:592.00px;background:#d4d4d4;"></div>
<svg class="i" style="left:12.00px;top:195.00px;" width="6" height="13" viewBox="0 0 6 13"><path d="M0.9 3.5 L4.4 1.1 V11.9" fill="none" stroke="#d6502f" stroke-width="1.45" stroke-linejoin="miter"/></svg>
<div class="b" style="left:32.00px;top:194.40px;width:141.20px;height:82.20px;background:#fff;border:3px solid #b83c1a;border-radius:6.5px;"></div>
<div class="b" style="left:209.00px;top:201.00px;width:31.50px;height:31.60px;background:#fff;border:1px solid #dedede;border-radius:8px;"></div>
<svg class="i" style="left:216.00px;top:208.00px;" width="18" height="18" viewBox="0 0 18 18"><path d="M9.2 1 Q9.7 4.7 13.4 5.2 Q9.7 5.7 9.2 9.4 Q8.7 5.7 5 5.2 Q8.7 4.7 9.2 1 Z" fill="#1b1b1b" stroke="#1b1b1b" stroke-width=".5" stroke-linejoin="round"/><path d="M13.5 7.9 Q13.8 10.2 16.1 10.5 Q13.8 10.8 13.5 13.1 Q13.2 10.8 10.9 10.5 Q13.2 10.2 13.5 7.9 Z" fill="#1b1b1b" stroke="#1b1b1b" stroke-width=".4" stroke-linejoin="round"/><path d="M1.3 11.3 L4.9 8.2" stroke="#1b1b1b" stroke-width="1.05" stroke-dasharray="2.1 .7"/><path d="M1.8 15.2 L7.5 10.3" stroke="#1b1b1b" stroke-width="1.05" stroke-dasharray="2.3 .8"/><path d="M5.7 15.5 L9 12.9" stroke="#1b1b1b" stroke-width="1.05" stroke-dasharray="2.1 .7"/></svg>
<div class="b" style="left:208.00px;top:240.00px;width:828.40px;height:466.60px;background:#fff;border:1px solid #d0d0d0;"></div>
<svg class="i" style="left:310.00px;top:314.00px;" width="626" height="286" viewBox="0 0 626 286"><rect x="1.4" y="1.9" width="622" height="163.3" fill="none" stroke="#a3a3a3" stroke-width="1" stroke-dasharray="3 1.7"/><rect x="1.4" y="170.3" width="622" height="113.9" fill="none" stroke="#a3a3a3" stroke-width="1" stroke-dasharray="3 1.7"/></svg>
<span class="t" style="transform:scaleX(1.0356);left:452.22px;top:418px;font-size:46.40px;line-height:54px;color:#000;-webkit-text-stroke:0.7px #000;">Click to add title</span>
<span class="t" style="transform:scaleX(1.1467);left:532.42px;top:487px;font-size:18.00px;line-height:22px;color:#000;-webkit-text-stroke:0.3px #000;">Click to add subtitle</span>
<div class="b" style="left:194.00px;top:769.60px;width:873.00px;height:1.00px;background:#dedede;"></div>
<div class="b" style="left:1066.00px;top:178.00px;width:1.00px;height:593.00px;background:#d9d9d9;"></div>
<div class="b" style="left:1067.00px;top:178.00px;width:377.00px;height:594.00px;background:#fafafa;"></div>
<div class="b" style="left:1268.70px;top:202.00px;width:74.70px;height:29.40px;border:1px solid #e0e0e0;border-radius:8px;background:#fafafa;"></div>
<span class="t" style="transform:scaleX(1.0814);left:1281.25px;top:210px;font-size:14.20px;line-height:17px;color:#2b2b2b;-webkit-text-stroke:0.5px #2b2b2b;">Auto</span>
<svg class="i" style="left:1320.30px;top:215.30px;" width="8.6" height="5.4" viewBox="0 0 8.6 5.4"><path d="M1 1 L4.3 4.4 L7.6 1" fill="none" stroke="#5c5c5c" stroke-width="1.1" stroke-linecap="round" stroke-linejoin="round" opacity="1"/></svg>
<div class="b" style="left:1351.80px;top:202.60px;width:27.80px;height:28.00px;background:#C43E1C;border-radius:7.5px;"></div>
<svg class="i" style="left:1357.80px;top:208.80px;" width="16" height="16" viewBox="0 0 16 16"><path d="M7.6 1.6 H4 A3 3 0 0 0 1 4.6 V11.6 A3 3 0 0 0 4 14.6 H11 A3 3 0 0 0 14 11.6 V8" fill="none" stroke="#fff" stroke-width="1.15" stroke-linecap="round"/><path d="M14.6 0.9 L6.4 9.1" stroke="#fff" stroke-width="1.15" stroke-linecap="round"/></svg>
<svg class="i" style="left:1396.80px;top:210.40px;" width="13" height="13" viewBox="0 0 13 13"><path d="M0.7 0.7 L12.3 12.3 M12.3 0.7 L0.7 12.3" stroke="#3b3b3b" stroke-width="1.2" stroke-linecap="round"/></svg>
<span class="t" style="transform:scaleX(0.9885);left:1111.94px;top:322px;font-size:21.00px;line-height:25px;color:#1f1f1f;-webkit-text-stroke:0.6px #1f1f1f;">Let's edit your presentation</span>
<div class="b" style="left:1094.50px;top:376.20px;width:323.20px;height:83.50px;background:#fff;border:1px solid #e3e3e3;border-bottom-color:#bdbdbd;border-radius:15px;box-shadow:0 1px 1.5px rgba(0,0,0,.12);"></div>
<span class="t" style="transform:scaleX(0.9320);left:1112.49px;top:390px;font-size:15.20px;line-height:18px;color:#707070;">Describe what you'd like to create or edit</span>
<svg class="i" style="left:1113.40px;top:427.30px;" width="16" height="16" viewBox="0 0 16 16"><path d="M8 0.6 V15.4 M0.6 8 H15.4" stroke="#424242" stroke-width="1.3" stroke-linecap="round"/></svg>
<div class="b" style="left:1137.20px;top:419.30px;width:65.00px;height:32.00px;background:#f5f5f5;border-radius:8px;"></div>
<svg class="i" style="left:1150.40px;top:426.60px;" width="19" height="18" viewBox="0 0 19 18"><circle cx="9.4" cy="8.5" r="8.4" fill="#d2401e"/><path d="M9.4 0 C9.9 3 9.9 6 9.4 9.3 H18" fill="none" stroke="#f5f5f5" stroke-width=".9"/><path d="M2 5.5 H9.6" stroke="#f5f5f5" stroke-width=".8"/><path d="M8.9 9 C9 12 8 15 6.4 17" fill="none" stroke="#f5f5f5" stroke-width=".9"/><rect x="0.6" y="5.3" width="8.3" height="9.7" rx="1.7" fill="#f5f5f5"/><rect x="1.3" y="6" width="6.9" height="8.3" rx="1.2" fill="#d2401e"/><path d="M3.6 12.4 V8 H5 A1.35 1.35 0 0 1 5 10.7 H3.6" fill="none" stroke="#fff" stroke-width="1.05"/></svg>
<svg class="i" style="left:1179.40px;top:431.20px;" width="9" height="9" viewBox="0 0 9 9"><path d="M0.7 0.7 L8.3 8.3 M8.3 0.7 L0.7 8.3" stroke="#2b2b2b" stroke-width="1.15" stroke-linecap="round"/></svg>
<div class="b" style="left:1097.80px;top:484.00px;width:316.30px;height:41.00px;background:#fff;border:1px solid #ececec;border-radius:11px;box-shadow:0 0.5px 1px rgba(0,0,0,.05);"></div>
<div class="b" style="left:1097.80px;top:537.20px;width:316.30px;height:41.40px;background:#fff;border:1px solid #ececec;border-radius:11px;box-shadow:0 0.5px 1px rgba(0,0,0,.05);"></div>
<div class="b" style="left:1097.80px;top:590.60px;width:316.30px;height:41.60px;background:#fff;border:1px solid #ececec;border-radius:11px;box-shadow:0 0.5px 1px rgba(0,0,0,.05);"></div>
<span class="t" style="transform:scaleX(0.9798);left:1110.14px;top:498px;font-size:12.60px;line-height:15px;color:#3d3d3d;-webkit-text-stroke:0.5px #3d3d3d;">Create a presentation about</span>
<span class="t" style="transform:scaleX(1.0517);left:1265.74px;top:498px;font-size:12.60px;line-height:15px;color:#b5531d;-webkit-text-stroke:0.5px #b5531d;">topic</span>
<span class="t" style="transform:scaleX(0.9903);left:1110.14px;top:552px;font-size:12.60px;line-height:15px;color:#3d3d3d;-webkit-text-stroke:0.5px #3d3d3d;">Add a slide about</span>
<span class="t" style="transform:scaleX(1.0144);left:1209.14px;top:552px;font-size:12.60px;line-height:15px;color:#b5531d;-webkit-text-stroke:0.5px #b5531d;">description</span>
<span class="t" style="transform:scaleX(0.9751);left:1110.14px;top:605px;font-size:12.60px;line-height:15px;color:#3d3d3d;-webkit-text-stroke:0.5px #3d3d3d;">Create a branded presentation</span>
<span class="t" style="transform:scaleX(0.9542);left:1110.24px;top:656px;font-size:12.60px;line-height:15px;color:#424242;">Show more</span>
<svg class="i" style="left:1176.00px;top:660.40px;" width="9" height="5.6" viewBox="0 0 9 5.6"><path d="M1 1 L4.5 4.6 L8 1" fill="none" stroke="#424242" stroke-width="1.1" stroke-linecap="round" stroke-linejoin="round" opacity="1"/></svg>
<span class="t" style="transform:scaleX(0.9751);left:1102.76px;top:734px;font-size:12.30px;line-height:15px;color:#424242;">M365 Copilot (Premium)</span>
<svg class="i" style="left:1240.90px;top:734.50px;" width="11" height="11" viewBox="0 0 11 11"><circle cx="5.5" cy="5.5" r="4.7" fill="none" stroke="#424242" stroke-width="1"/><path d="M5.5 4.9 V8" stroke="#424242" stroke-width="1.1"/><circle cx="5.5" cy="3.3" r=".7" fill="#424242"/></svg>
<div class="b" style="left:0.00px;top:772.00px;width:1444.00px;height:22.00px;background:#f4f4f4;border-top:1px solid #dcdcdc;"></div>
<span class="t" style="transform:scaleX(0.9764);left:9.56px;top:777px;font-size:10.60px;line-height:13px;color:#3b3b3b;">Slide 1 of 1</span>
<svg class="i" style="left:94.00px;top:776.00px;" width="17" height="15" viewBox="0 0 17 15"><circle cx="6.6" cy="2.3" r="1.6" fill="none" stroke="#3b3b3b" stroke-width="1"/><path d="M1 2.6 C1.6 5 4 5.2 4.6 5.2 H8.6 C9.2 5.2 11.6 5 12.2 2.6" fill="none" stroke="#3b3b3b" stroke-width="1.05" stroke-linecap="round"/><path d="M4.6 5.2 V9.4 C4.6 11.4 3.6 12.6 2.4 13.8 M8.6 5.2 V8" fill="none" stroke="#3b3b3b" stroke-width="1.05" stroke-linecap="round"/><path d="M7.2 11.4 L9.6 13.6 L14.6 8.2" fill="none" stroke="#3b3b3b" stroke-width="1.2" stroke-linecap="round" stroke-linejoin="round"/></svg>
<span class="t" style="transform:scaleX(0.9738);left:112.36px;top:777px;font-size:10.60px;line-height:13px;color:#3b3b3b;">Accessibility: Good to go</span>
<svg class="i" style="left:1015.00px;top:775.00px;" width="17" height="17" viewBox="0 0 17 17"><path d="M4.9 4.1 L8.3 1.1 L11.7 4.1" fill="none" stroke="#3b3b3b" stroke-width="1.15"/><path d="M0.4 7.9 H16.2 M0.4 11.7 H16.2 M0.4 15.5 H16.2" stroke="#3b3b3b" stroke-width="1.1"/></svg>
<span class="t" style="transform:scaleX(0.9812);left:1033.46px;top:777px;font-size:10.60px;line-height:13px;color:#3b3b3b;">Notes</span>
<div class="b" style="left:1079.60px;top:773.00px;width:39.40px;height:21.00px;background:#e0e0e0;"></div>
<svg class="i" style="left:1091.40px;top:776.60px;" width="16" height="13" viewBox="0 0 16 13"><rect x="0.6" y="0.6" width="14.8" height="11.8" fill="none" stroke="#3b3b3b" stroke-width="1.1"/><path d="M3.4 0.6 V12.4" stroke="#3b3b3b" stroke-width="1"/><rect x="6" y="3" width="7" height="4.6" fill="none" stroke="#3b3b3b" stroke-width="1"/></svg>
<svg class="i" style="left:1132.00px;top:776.60px;" width="16" height="13" viewBox="0 0 16 13"><rect x="0.6" y="0.8" width="5.6" height="4.2" fill="none" stroke="#3b3b3b" stroke-width="1.1"/><rect x="0.6" y="7.8" width="5.6" height="4.2" fill="none" stroke="#3b3b3b" stroke-width="1.1"/><rect x="9" y="0.8" width="5.6" height="4.2" fill="none" stroke="#3b3b3b" stroke-width="1.1"/><rect x="9" y="7.8" width="5.6" height="4.2" fill="none" stroke="#3b3b3b" stroke-width="1.1"/></svg>
<svg class="i" style="left:1171.60px;top:775.60px;" width="15" height="14" viewBox="0 0 15 14"><path d="M7.4 1.5 C5.6 0.5 2.8 0.5 0.9 1.1 V11.9 C2.8 11.3 5.6 11.3 7.4 12.6 C9.2 11.3 12 11.3 13.9 11.9 V1.1 C12 0.5 9.2 0.5 7.4 1.5 Z M7.4 1.5 V12.6" fill="none" stroke="#3b3b3b" stroke-width="1.25" stroke-linejoin="round"/><path d="M2.8 3.2 H5.6 M2.8 5 H5.6 M2.8 6.8 H5.6 M2.8 8.6 H5.6 M9.2 3.2 H12 M9.2 5 H12 M9.2 6.8 H12 M9.2 8.6 H12" stroke="#6a6a6a" stroke-width=".8"/></svg>
<svg class="i" style="left:1212.00px;top:775.80px;" width="14" height="14" viewBox="0 0 14 14"><path d="M0.4 1 H13.1" stroke="#3b3b3b" stroke-width="1.3"/><path d="M1.8 1.2 V8.3 H11.8 V1.2" fill="none" stroke="#3b3b3b" stroke-width="1.2"/><path d="M6.8 8.3 V12.9 M3.6 12.9 H10.2" stroke="#3b3b3b" stroke-width="1.2"/><path d="M4.8 4 H8.8" stroke="#3b3b3b" stroke-width="1"/></svg>
<div class="b" style="left:1245.00px;top:782.60px;width:7.40px;height:1.00px;background:#6a6a6a;"></div>
<div class="b" style="left:1258.30px;top:782.60px;width:98.40px;height:1.00px;background:#6a6a6a;"></div>
<div class="b" style="left:1307.20px;top:780.60px;width:1.00px;height:5.40px;background:#6a6a6a;"></div>
<div class="b" style="left:1286.80px;top:777.00px;width:4.80px;height:11.60px;background:#555;"></div>
<svg class="i" style="left:1362.00px;top:779.20px;" width="8" height="8" viewBox="0 0 8 8"><path d="M0.3 3.9 H7.3 M3.8 0.4 V7.4" stroke="#6a6a6a" stroke-width="1"/></svg>
<span class="t" style="left:1381.56px;top:777px;font-size:10.60px;line-height:13px;color:#3b3b3b;">65%</span>
<svg class="i" style="left:1414.80px;top:775.20px;" width="16" height="16" viewBox="0 0 16 16"><rect x="4.2" y="4.6" width="7.6" height="6.8" rx="1" fill="none" stroke="#3b3b3b" stroke-width="1.1"/><path d="M6 2.6 L8 0.7 L10 2.6 M6 13.4 L8 15.3 L10 13.4 M2.4 6 L0.6 8 L2.4 10 M13.6 6 L15.4 8 L13.6 10" fill="none" stroke="#3b3b3b" stroke-width="1.05" stroke-linecap="round" stroke-linejoin="round"/></svg>
</div></body></html>
